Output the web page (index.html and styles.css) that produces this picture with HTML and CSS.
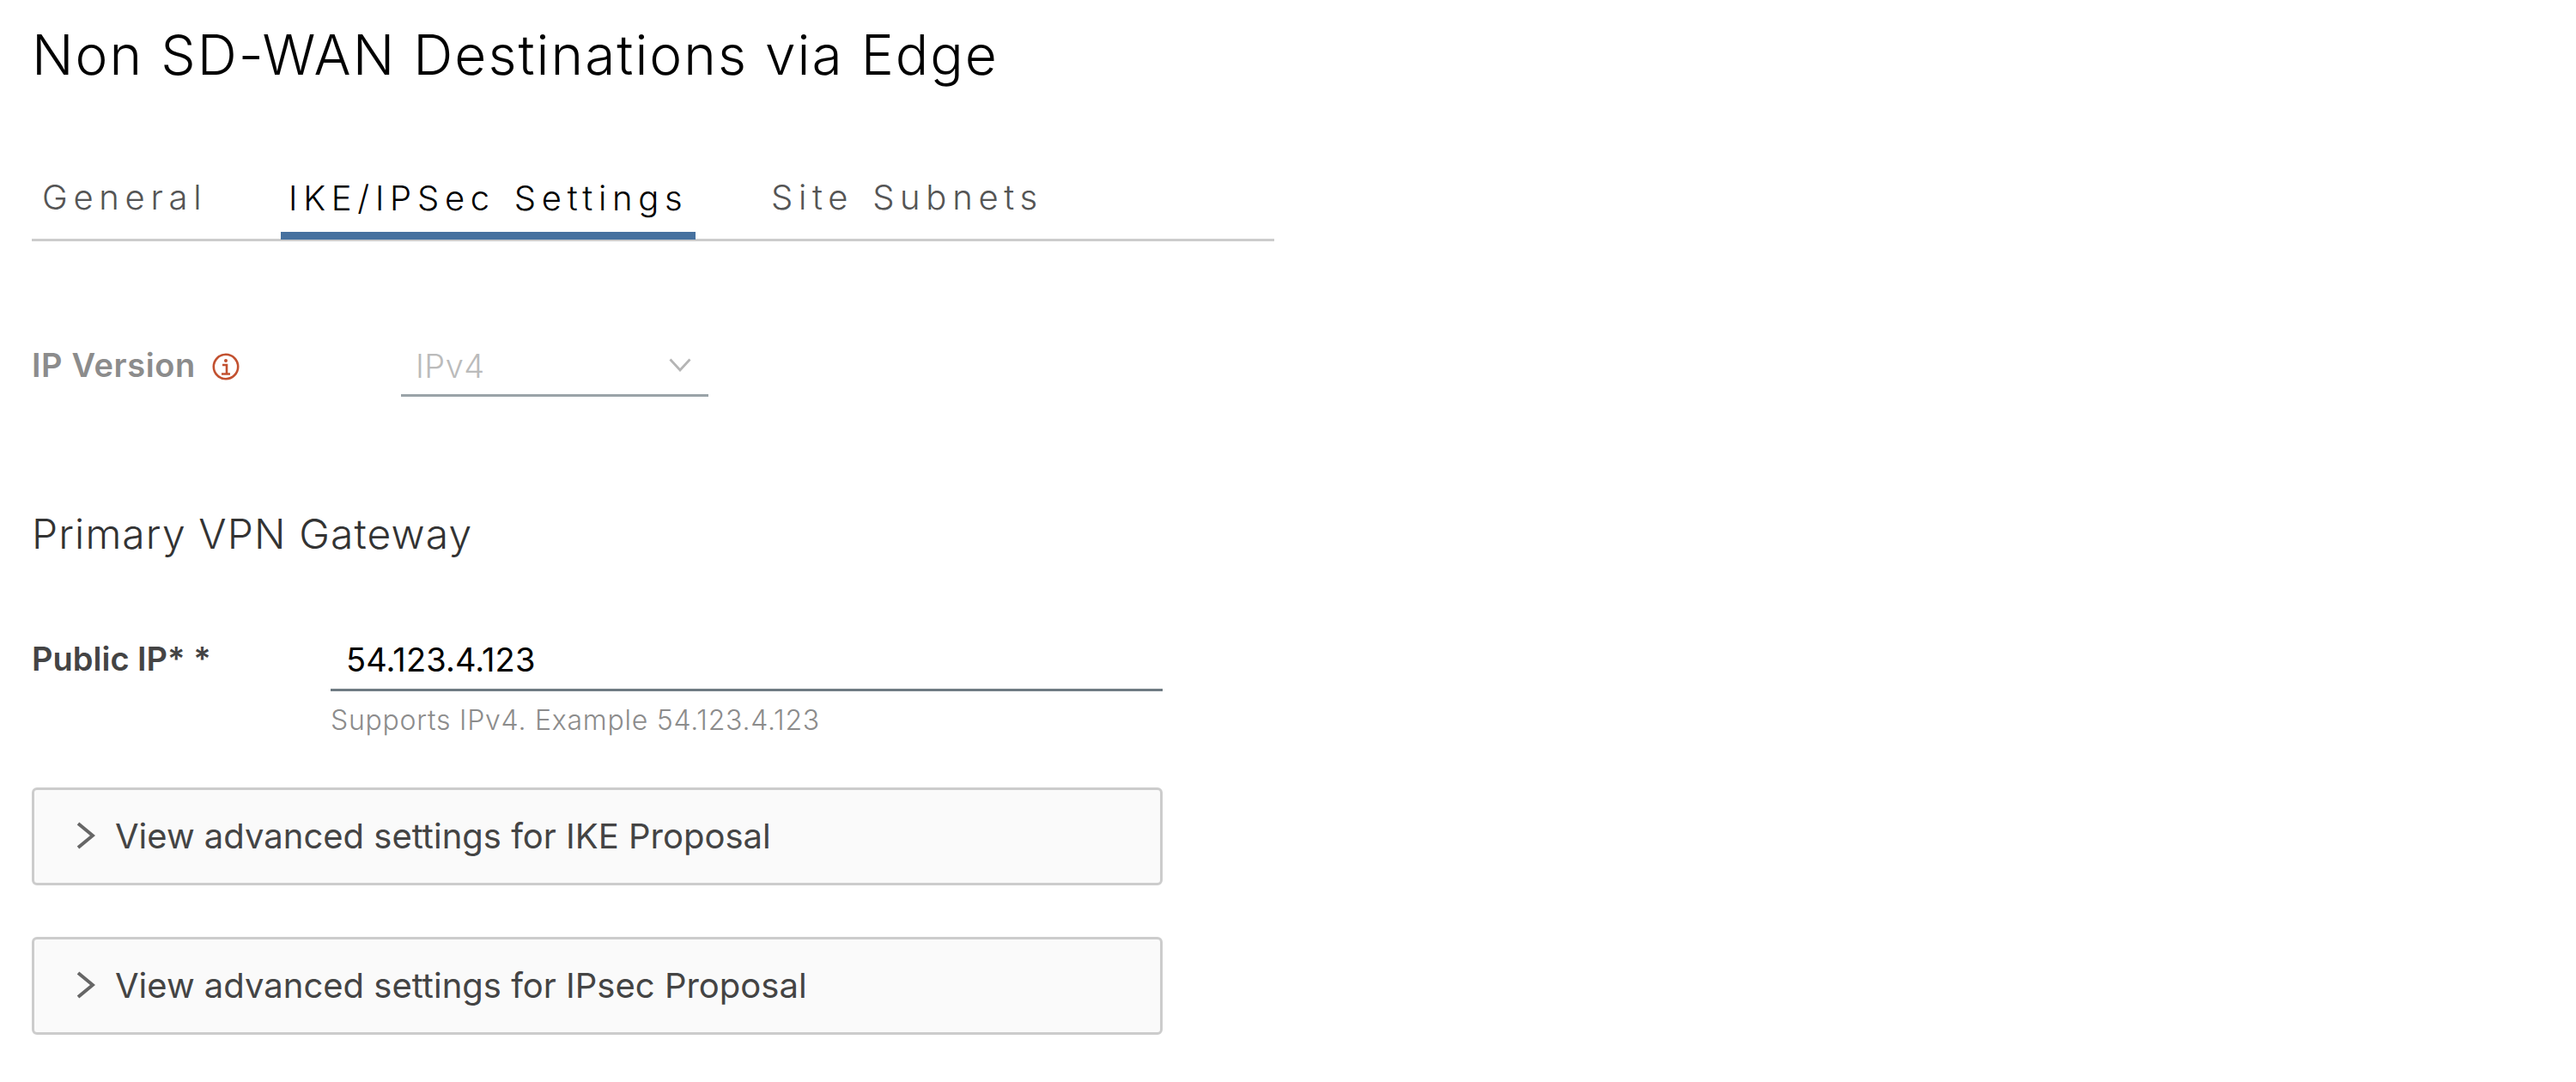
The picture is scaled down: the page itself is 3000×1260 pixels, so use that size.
FILE: index.html
```html
<!DOCTYPE html>
<html>
<head>
<title>Non SD-WAN Destinations via Edge</title>
<link rel="stylesheet" href="styles.css">
</head>
<body>
<h1 class="page-title">Non SD-WAN Destinations via Edge</h1>

<div class="tabs">
  <a class="tab tab-general">General</a>
  <a class="tab tab-active">IKE/IPSec Settings</a>
  <a class="tab tab-site">Site Subnets</a>
</div>

<div class="row-version">
  <label class="version-label">IP Version</label>
  <svg class="info-icon" viewBox="0 0 32 32">
    <circle cx="16" cy="16" r="14.2" fill="none" stroke="#c25130" stroke-width="2.6"/>
    <circle cx="16" cy="9" r="2" fill="#c25130"/>
    <path d="M12 14h5v10M11 24.5h10" fill="none" stroke="#c25130" stroke-width="2.6"/>
  </svg>
  <div class="select">
    <span>IPv4</span>
    <svg class="select-caret" viewBox="0 0 26 16">
      <path d="M1.5 1.5L13 14L24.5 1.5" fill="none" stroke="#b5b5b5" stroke-width="2.8"/>
    </svg>
  </div>
</div>

<h2 class="section-title">Primary VPN Gateway</h2>

<div class="row-ip">
  <label class="ip-label">Public IP* *</label>
  <div class="ip-field">
    <div class="ip-input">54.123.4.123</div>
    <div class="ip-help">Supports IPv4. Example 54.123.4.123</div>
  </div>
</div>

<div class="panel panel-first">
  <svg class="panel-caret" viewBox="0 0 22 32">
    <path d="M2 2L19 16L2 30" fill="none" stroke="#666" stroke-width="4"/>
  </svg>
  <span>View advanced settings for IKE Proposal</span>
</div>
<div class="panel">
  <svg class="panel-caret" viewBox="0 0 22 32">
    <path d="M2 2L19 16L2 30" fill="none" stroke="#666" stroke-width="4"/>
  </svg>
  <span>View advanced settings for IPsec Proposal</span>
</div>
</body>
</html>
```

FILE: styles.css
```css
/* Non SD-WAN edge form */

body
{ margin: 0;
padding-left: 37px;
background-color: #fff;
font-family: "Inter", "Liberation Sans", sans-serif;
color: #444;
}

h1.page-title
{ margin: 0;
padding-top: 29px;
font-size: 64px;
line-height: 70px;
font-weight: 300;
color: #000;
letter-spacing: 2px;
}

div.tabs
{ display: flex;
width: 1447px;
height: 182px;
margin-top: 0;
box-sizing: border-box;
align-items: flex-end;
border-bottom: 3px solid #ccc;
}

a.tab
{ display: block;
font-size: 40px;
line-height: 62px;
height: 79px;
box-sizing: border-box;
font-weight: 300;
letter-spacing: 6.7px;
word-spacing: 4px;
white-space: pre;
color: #555;
}

a.tab-general { padding-left: 12px; width: 290px; }
a.tab-active
{ width: 483px;
padding-left: 9px;
color: #000;
border-bottom: 9px solid #46719f;
margin-bottom: -1px;
}
a.tab-site { padding-left: 88px; }

div.row-version
{ display: flex;
align-items: center;
height: 66px;
margin-top: 115px;
}

label.version-label
{ font-size: 38px;
font-weight: 600;
color: #8c8c8c;
letter-spacing: 0.6px;
width: 210px;
margin-bottom: 8px;
}

svg.info-icon
{ width: 32px;
height: 32px;
margin-bottom: 4px;
}

div.select
{ display: flex;
justify-content: space-between;
align-items: center;
width: 358px;
height: 66px;
box-sizing: border-box;
margin-left: 188px;
padding: 0 20px 0 17px;
border-bottom: 3px solid #9aa3a8;
font-size: 38px;
font-weight: 300;
letter-spacing: 0.4px;
color: #bbb;
}

div.select span { margin-bottom: 3px; }

svg.select-caret
{ width: 26px;
height: 16px;
margin-bottom: 5px;
}

h2.section-title
{ margin: 132px 0 0 0;
font-size: 48px;
line-height: 56px;
font-weight: 300;
letter-spacing: 1.1px;
color: #333;
}

div.row-ip
{ display: flex;
margin-top: 90px;
}

label.ip-label
{ width: 348px;
font-size: 38px;
line-height: 54px;
font-weight: 600;
color: #444;
}

div.ip-field { width: 969px; }

div.ip-input
{ height: 65px;
box-sizing: border-box;
padding-left: 18px;
border-bottom: 3px solid #6f7b83;
font-size: 38px;
line-height: 56px;
letter-spacing: 0.1px;
color: #000;
font-weight: 400;
}

div.ip-help
{ margin-top: 12px;
font-size: 32px;
line-height: 44px;
font-weight: 300;
letter-spacing: 0.75px;
color: #8c8c8c;
}

div.panel
{ display: flex;
align-items: center;
width: 1317px;
height: 114px;
margin-top: 60px;
box-sizing: border-box;
padding-left: 49px;
padding-bottom: 2px;
background-color: #fafafa;
border: 3px solid #ccc;
border-radius: 6px;
font-size: 40px;
font-weight: 400;
color: #444;
}

div.panel-first { margin-top: 56px; }

svg.panel-caret
{ width: 22px;
height: 32px;
margin-right: 23px;
}
```
